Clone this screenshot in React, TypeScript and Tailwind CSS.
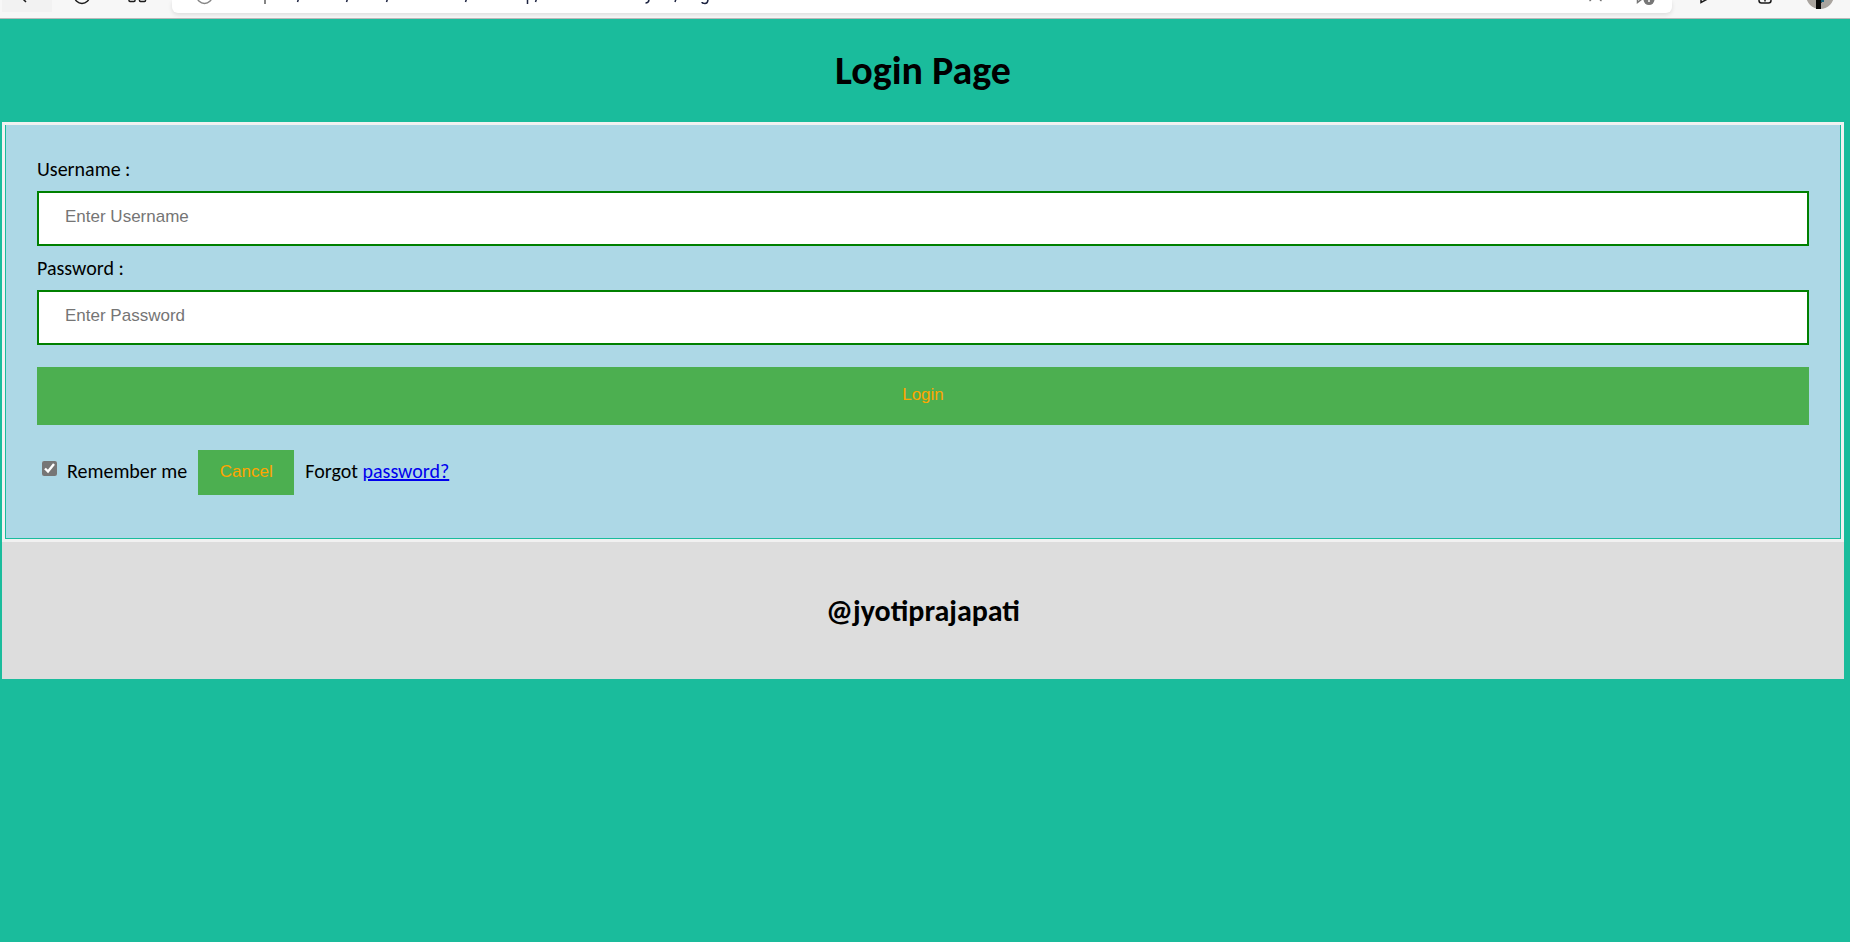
import { useState } from "react";

function BrowserBar() {
  return (
    <header className="flex h-[19px] items-start border-b border-[#b9b9b9] bg-[#f7f7f7] pl-0.5">
      <div className="h-3 w-[50px] shrink-0 bg-[#f2f2f2]">
        <svg className="h-3 w-[50px]" viewBox="0 0 50 12" fill="none" stroke="#1b1b1b" strokeWidth="1.5" aria-hidden="true">
          <path d="M21 -1 L24 2" />
        </svg>
      </div>
      <svg className="h-3 w-[120px] shrink-0" viewBox="52 0 120 12" fill="none" stroke="#1b1b1b" strokeWidth="1.5" aria-hidden="true">
        <circle cx="82" cy="-4" r="7.5" />
        <path d="M129 -1V0.5a1 1 0 0 0 1 1h4a1 1 0 0 0 1-1V-1M139.500 -1V0.500a1 1 0 0 0 1 1h4a1 1 0 0 0 1-1V-1" />
      </svg>
      <div className="flex h-[13px] grow justify-between rounded-b-md bg-white shadow-[0_2px_4px_#0000001a]">
        <svg className="h-3 w-[560px] shrink-0" viewBox="172 0 560 12" fill="none" stroke="#1c2340" strokeWidth="1.5" aria-hidden="true">
          <circle cx="204.500" cy="-4" r="7.500" stroke="#858585" />
          <path d="M265 0V4" stroke="#858585" strokeWidth="2" />
          <path d="M298.500 -1L297.500 2M347.500 -1L346.500 2M387.500 -1L386.500 2M466.500 -1L465.500 2M536.500 -1L535.500 2M676 -1L675 2M527.500 -1V4M649 -1Q649 3 645.500 3M708 -1Q708 3.500 705 3.500Q702 3.500 702 2" />
        </svg>
        <svg className="h-3 w-[100px] shrink-0" viewBox="1572 0 100 12" fill="none" stroke="#777" strokeWidth="1.5" aria-hidden="true">
          <path d="M1589.500 1L1591 0M1601.500 1L1600 0M1637.500 -1V2.500L1642 -1" />
          <circle cx="1649" cy="-0.500" r="5.500" fill="#777" stroke="none" />
          <path d="M1649 -1V2" stroke="#fff" />
        </svg>
      </div>
      <svg className="h-3 w-[178px] shrink-0" viewBox="1672 0 178 12" fill="none" stroke="#1b1b1b" strokeWidth="1.5" aria-hidden="true">
        <path d="M1701 -1V2.500L1707.500 -1" />
        <path d="M1759 -1V0.500a2.500 2.500 0 0 0 2.500 2.500h7a2.500 2.500 0 0 0 2.500-2.500V-1M1765 -1V1.500" />
        <circle cx="1820" cy="-5" r="14" fill="#a9a49f" stroke="none" />
        <path d="M1816 -1h9l-4 4v6h-5z" fill="#080808" stroke="none" />
        <path d="M1821 0h3v2h-3z" fill="#17607a" stroke="none" />
      </svg>
    </header>
  );
}

const fieldClass =
  "my-2 block h-[55px] w-full border-2 border-[#008000] bg-white px-[26px] pb-1 font-['Liberation_Sans',sans-serif] text-[17px] text-black outline-none placeholder:text-[#757575]";
const actionClass =
  "cursor-pointer bg-[#4caf50] pb-0.5 font-['Liberation_Sans',sans-serif] text-[17px] text-[#ffa500]";

export default function App() {
  const [remember, setRemember] = useState(true);

  return (
    <div className="flex min-h-screen flex-col bg-[#1abc9c] font-[Carlito,Lato,sans-serif] text-xl text-black">
      <BrowserBar />
      <main className="pr-1.5 pl-0.5">
        <h1 className="flex h-[103px] items-center justify-center text-[40px] font-bold">Login Page</h1>
        <form className="border-3 border-[#f1f1f1]" onSubmit={(e) => e.preventDefault()}>
          <div className="mx-px mb-px bg-[#add8e6] px-[31px] pt-[30px] pb-[43px]">
            <label htmlFor="username" className="block h-7 leading-7">Username :</label>
            <input id="username" type="text" placeholder="Enter Username" className={fieldClass} />
            <label htmlFor="password" className="block h-7 leading-7">Password :</label>
            <input id="password" type="password" placeholder="Enter Password" className={fieldClass} />
            <button type="submit" className={`${actionClass} mt-[22px] block h-[58px] w-full`}>Login</button>
            <div className="mt-[25px] flex h-[45px] items-center">
              <input
                id="remember"
                type="checkbox"
                checked={remember}
                onChange={(e) => setRemember(e.target.checked)}
                className="mb-2 ml-[5px] size-[15px] accent-[#767676]"
              />
              <label htmlFor="remember" className="pb-1 pl-2.5">
                Remember me
              </label>
              <button type="button" className={`${actionClass} ml-[11px] h-[45px] w-24`}>Cancel</button>
              <span className="ml-[11px] pb-1">
                Forgot <a href="#" className="text-[#0000ee] underline">password?</a>
              </span>
            </div>
          </div>
        </form>
        <footer className="flex h-[137px] items-center justify-center bg-[#dddddd]">
          <h2 className="text-[30px] font-bold">@jyotiprajapati</h2>
        </footer>
      </main>
    </div>
  );
}
